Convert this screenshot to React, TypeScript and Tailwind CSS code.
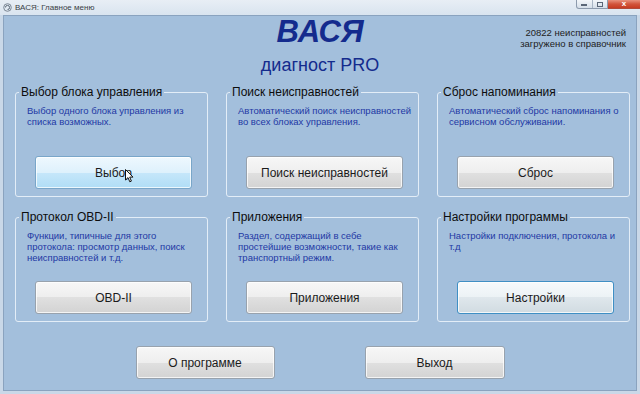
import React from "react";

const FONT = "font-['Liberation_Sans','Arial',sans-serif]";

const BTN_BASE =
  "h-[33px] rounded-[3px] border text-[12px] leading-none text-[#1b1b1b] shadow-[inset_0_0_0_1px_rgba(255,255,255,0.75)]";
const BTN_NORMAL =
  "border-[#98a2ad] bg-[linear-gradient(#f7f7f7,#eeeeee_50%,#e0e0e0_50%,#d3d3d3)]";
const BTN_HOVER =
  "border-[#79a6c9] bg-[linear-gradient(#eef8fe,#def1fc_50%,#c6e7fa_50%,#b0ddf6)]";
const BTN_FOCUS =
  "border-[#3f8fc4] bg-[linear-gradient(#f6fafc,#ecf2f5_50%,#dfe7ec_50%,#d1dbe1)] shadow-[inset_0_0_0_1px_rgba(200,235,255,0.9)]";

interface Group {
  title: string;
  lines: string[];
  button: string;
  state?: "hover" | "focus";
}

const GROUPS: Group[] = [
  {
    title: "Выбор блока управления",
    lines: ["Выбор одного блока управления из", "списка возможных."],
    button: "Выбор",
    state: "hover",
  },
  {
    title: "Поиск неисправностей",
    lines: ["Автоматический поиск неисправностей", "во всех блоках управления."],
    button: "Поиск неисправностей",
  },
  {
    title: "Сброс напоминания",
    lines: ["Автоматический сброс напоминания о", "сервисном обслуживании."],
    button: "Сброс",
  },
  {
    title: "Протокол OBD-II",
    lines: [
      "Функции, типичные для этого",
      "протокола: просмотр данных, поиск",
      "неисправностей и т.д.",
    ],
    button: "OBD-II",
  },
  {
    title: "Приложения",
    lines: [
      "Раздел, содержащий в себе",
      "простейшие возможности, такие как",
      "транспортный режим.",
    ],
    button: "Приложения",
  },
  {
    title: "Настройки программы",
    lines: ["Настройки подключения, протокола и", "т.д"],
    button: "Настройки",
    state: "focus",
  },
];

function Cursor() {
  return (
    <svg
      className="absolute left-[89px] top-[12px]"
      width="9"
      height="14"
      viewBox="0 0 9 14"
    >
      <path
        d="M0.5 0.5 L0.5 11 L3 8.6 L4.8 12.8 L6.4 12.1 L4.7 8.1 L8 8.1 Z"
        fill="#fff"
        stroke="#111"
        strokeWidth="1"
        strokeLinejoin="round"
      />
    </svg>
  );
}

function GroupBox({ group }: { group: Group }) {
  const look =
    group.state === "hover"
      ? BTN_HOVER
      : group.state === "focus"
        ? BTN_FOCUS
        : BTN_NORMAL;
  return (
    <fieldset className="h-[112px] rounded-[3px] border border-[#e3edf7]">
      <legend className="ml-[3px] px-[2px] text-[12px] leading-[14px] text-[#0d0d0d]">
        {group.title}
      </legend>
      <div className="h-[57px] pl-[11px] pt-[6px] text-[9.5px] leading-[11px] text-[#2238a4]">
        {group.lines.map((l) => (
          <div key={l} className="whitespace-nowrap">
            {l}
          </div>
        ))}
      </div>
      <button className={`relative ml-[19px] w-[157px] ${BTN_BASE} ${look}`}>
        {group.button}
        {group.state === "hover" && <Cursor />}
      </button>
    </fieldset>
  );
}

function TitleBar() {
  return (
    <div className="flex h-[15px] items-start bg-[linear-gradient(#e8eef5,#d9e4ef)]">
      <svg className="ml-[3px] mt-[3px]" width="9" height="9" viewBox="0 0 9 9">
        <circle cx="4.5" cy="4.5" r="3.8" fill="none" stroke="#7b8794" strokeWidth="1" />
        <path d="M2.4 4.5 A2.1 2.1 0 1 1 4.5 6.6" fill="none" stroke="#5d6a78" strokeWidth="1" />
      </svg>
      <span className="ml-[3px] mt-[3px] text-[8px] leading-[9px] text-[#3a3f46]">
        ВАСЯ: Главное меню
      </span>
      <div className="ml-auto flex h-[9px]">
        <div className="flex w-[32px] rounded-bl-[3px] border border-t-0 border-[#8d9bad] bg-[linear-gradient(#f3f6f9,#d6dfe9)]">
          <div className="flex flex-1 items-end justify-center border-r border-[#a9b6c5] pb-[2px]">
            <div className="h-[2px] w-[6px] bg-[#5b6777]" />
          </div>
          <div className="flex flex-1 items-center justify-center">
            <div className="h-[5px] w-[6px] border border-[#5b6777]" />
          </div>
        </div>
        <div className="flex w-[32px] items-center justify-center border-b border-[#b14a3a] bg-[linear-gradient(#e8917d,#d2553c_50%,#c63b22)] text-[8px] font-bold leading-none text-white">
          x
        </div>
      </div>
    </div>
  );
}

export default function App() {
  return (
    <div
      className={`flex h-[394px] w-[640px] flex-col overflow-hidden bg-[#c9d8e8] ${FONT}`}
    >
      <TitleBar />
      <div className="mx-[3px] mb-[3px] flex flex-1 flex-col border border-[#8aa3bf] bg-[#a3bfdc]">
        {/* header */}
        <div className="grid h-[69px] grid-cols-[1fr_auto_1fr]">
          <div />
          <div className="flex flex-col items-center text-[#142b8d]">
            <div className="text-[31px] font-bold italic leading-[31px]">ВАСЯ</div>
            <div className="mt-[9px] text-[18px] leading-[18px]">диагност PRO</div>
          </div>
          <div className="pr-[10px] pt-[11px] text-right text-[9.5px] leading-[11px] text-[#222]">
            <div>20822 неисправностей</div>
            <div>загружено в справочник</div>
          </div>
        </div>

        {/* groups */}
        <div className="grid grid-cols-[193px_193px_193px] gap-x-[18px] gap-y-[13px] pl-[11px]">
          {GROUPS.map((g) => (
            <GroupBox key={g.title} group={g} />
          ))}
        </div>

        {/* bottom buttons */}
        <div className="mt-[24px] flex justify-center gap-[90px]">
          <button className={`w-[139px] ${BTN_BASE} ${BTN_NORMAL}`}>О программе</button>
          <button className={`w-[140px] ${BTN_BASE} ${BTN_NORMAL}`}>Выход</button>
        </div>
      </div>
    </div>
  );
}
